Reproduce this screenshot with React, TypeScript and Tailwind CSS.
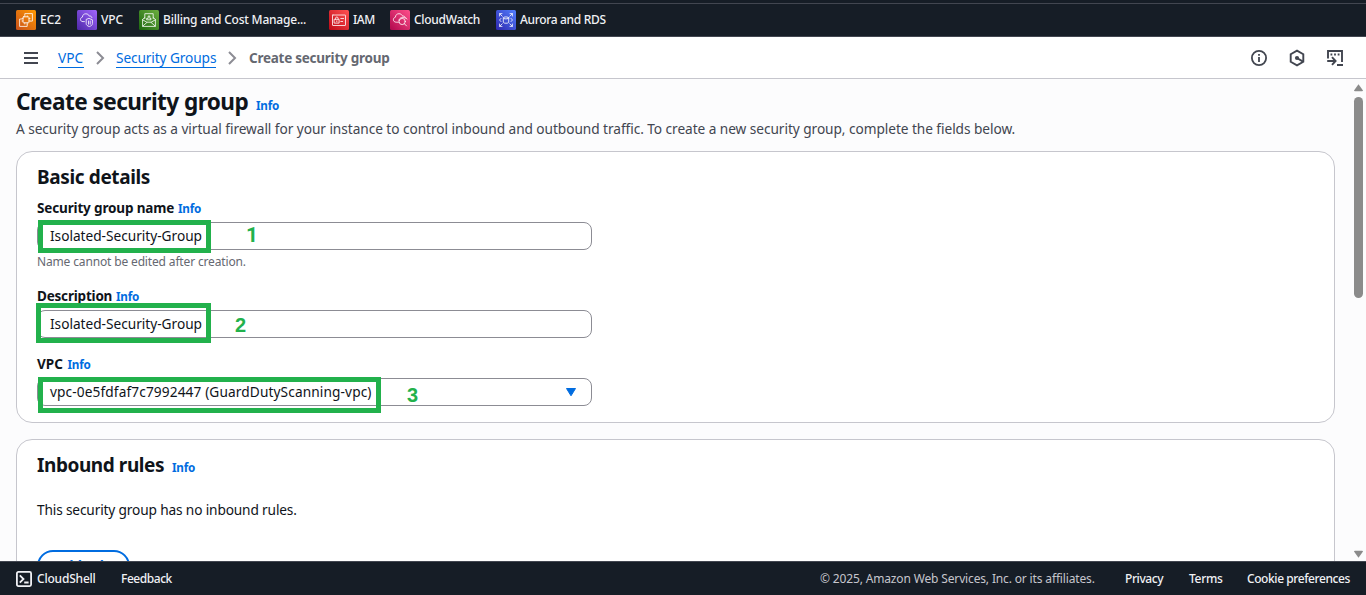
import type { ReactNode } from "react";

function ServiceIcon({ id, from, to, children }: { id: string; from: string; to: string; children: ReactNode }) {
  return (
    <svg width="20" height="20" viewBox="0 0 20 20" fill="none" stroke="white" strokeWidth="0.8" strokeLinejoin="round" strokeLinecap="round" className="shrink-0">
      <defs>
        <linearGradient id={id} x1="0" y1="1" x2="1" y2="0">
          <stop offset="0" stopColor={from} />
          <stop offset="1" stopColor={to} />
        </linearGradient>
      </defs>
      <rect width="20" height="20" rx="1.5" fill={`url(#${id})`} stroke="none" />
      {children}
    </svg>
  );
}

const cloud = "M8.6 12.2H6.2C4.6 12.2 3.4 11.2 3.4 9.7C3.4 8.3 4.3 7.5 5.4 7.2C5.5 5 7 3.7 9 3.7C10.8 3.7 12.1 4.8 12.6 6.2C14.3 5.8 15 6.6 15.1 7.7C16.2 7.9 16.8 8.4 17 9";

function TopBar() {
  return (
    <header className="flex h-[37px] shrink-0 flex-col border-b border-[#424650] bg-[#161d26] pt-[3px] text-[12px] font-medium text-[#f0f1f5]">
      <div className="flex h-[33px] items-center border-t border-[#424650] pl-4">
        <div className="flex w-[61px] shrink-0 items-center gap-1">
          <ServiceIcon id="g-ec2" from="#c8511b" to="#f90">
            <rect x="7" y="6.8" width="6" height="6" rx="0.6" />
            <path d="M8.8 6.8V5.8M11.2 6.8V5.8M8.8 12.8V14M11.2 12.8V14M13 8.6H14M13 11H14M7 8.6H6M7 11H6" />
            <path d="M8.8 5.2V3.6H16.4V11.1H14.5M5.4 9H3.6V16.4H11.2V14.4" />
          </ServiceIcon>
          <span>EC2</span>
        </div>
        <div className="flex w-[62px] shrink-0 items-center gap-1">
          <ServiceIcon id="g-vpc" from="#4d27a8" to="#a166ff">
            <path d="M7.4 11.6H6C4.5 11.6 3.5 10.8 3.5 9.4C3.5 8.1 4.4 7.4 5.4 7.1C5.5 5 6.9 3.8 8.8 3.8C10.6 3.8 11.8 4.8 12.3 6.1C13.9 5.8 14.8 6.6 14.9 7.7" />
            <path d="M12.3 8.5L15.4 9.8V13.6C15.4 15 14.3 16 12.3 16.5C10.3 16 9.2 15 9.2 13.6V9.8Z" />
            <path d="M11.5 11V14.2M13.2 11V14.2" />
          </ServiceIcon>
          <span className="tracking-[-0.1px]">VPC</span>
        </div>
        <div className="flex w-[190px] shrink-0 items-center gap-1">
          <ServiceIcon id="g-bill" from="#1b660f" to="#6cae3e">
            <path d="M5.8 8.5V3.7H14.2V8.5M5.8 7.6L3.6 9.4V16.4H16.4V9.4L14.2 7.6M3.6 9.8L8 12.3M16.4 9.8L12 12.3M3.9 16L8.2 12.2H11.8L16.1 16" />
            <path d="M8 9.8H12V8.4H10.8V6H9.2V8.4H8Z" />
          </ServiceIcon>
          <span className="tracking-[-0.22px]">Billing and Cost Manage...</span>
        </div>
        <div className="flex w-[61px] shrink-0 items-center gap-1">
          <ServiceIcon id="g-iam" from="#bd0816" to="#ff5252">
            <rect x="3.5" y="5" width="13" height="10.5" rx="0.4" />
            <rect x="5.5" y="9.3" width="4.6" height="3.8" />
            <path d="M6.5 9.2V8.2C6.5 6.6 9.1 6.6 9.1 8.2V9.2M7.8 10.8V11.7M11.8 8.5H14.6M11.8 11.5H13.6" />
          </ServiceIcon>
          <span className="tracking-[-0.4px]">IAM</span>
        </div>
        <div className="flex w-[106px] shrink-0 items-center gap-1">
          <ServiceIcon id="g-cw" from="#b0084d" to="#ff4f8b">
            <path d={cloud} />
            <circle cx="12.2" cy="11.5" r="3.1" />
            <path d="M8.8 10.4C9.4 7.5 12.6 6.6 15.1 8M14.5 13.8L16.5 15.9" />
          </ServiceIcon>
          <span className="tracking-[-0.3px]">CloudWatch</span>
        </div>
        <div className="flex shrink-0 items-center gap-1">
          <ServiceIcon id="g-rds" from="#2e27ad" to="#527fff">
            <path d="M3.6 6V3.6H6M3.8 3.8L6.2 6.2M14 3.6H16.4V6M16.2 3.8L13.8 6.2M3.6 14V16.4H6M3.8 16.2L6.2 13.8M14 16.4H16.4V14M16.2 16.2L13.8 13.8" />
            <ellipse cx="10" cy="7.9" rx="2.7" ry="1" />
            <path d="M7.3 7.9V12.3C7.3 13.6 12.7 13.6 12.7 12.3V7.9M5 8.4L3.5 10L5 11.6M15 8.4L16.5 10L15 11.6" />
          </ServiceIcon>
          <span className="tracking-[-0.33px]">Aurora and RDS</span>
        </div>
      </div>
    </header>
  );
}

function Chevron() {
  return (
    <svg width="10" height="14" viewBox="0 0 10 14" fill="none" stroke="#8c8c94" strokeWidth="2" className="shrink-0">
      <path d="M2 1L8 7L2 13" />
    </svg>
  );
}

function Breadcrumbs() {
  return (
    <nav className="flex h-[42px] shrink-0 items-center border-b border-[#c6c6cd] bg-white pl-6 pr-[22px] text-[13.7px]">
      <svg width="14" height="12" viewBox="0 0 14 12" stroke="#424650" strokeWidth="2" className="mr-5 shrink-0">
        <path d="M0 1H14M0 6H14M0 11H14" />
      </svg>
      <a className="mr-[11px] h-[20px] w-[26px] border-b border-[#006ce0] leading-[20px] text-[#006ce0]">VPC</a>
      <Chevron />
      <a className="ml-[11px] mr-[11px] h-[20px] w-[100px] whitespace-nowrap border-b border-[#006ce0] leading-[20px] tracking-[-0.11px] text-[#006ce0]">Security Groups</a>
      <Chevron />
      <span className="ml-[12px] whitespace-nowrap pt-[2px] text-[13.5px] font-bold tracking-[-0.25px] text-[#656871]">Create security group</span>
      <div className="ml-auto flex items-center gap-5">
        <svg width="18" height="18" viewBox="0 0 18 18" fill="none" stroke="#424650" strokeWidth="1.8">
          <circle cx="9" cy="9" r="7.1" />
          <path d="M9 5V6.8M9 8V13" />
        </svg>
        <svg width="18" height="18" viewBox="0 0 18 18" fill="none" stroke="#424650" strokeWidth="1.9">
          <path d="M9 1.7L15.3 5.2V12.8L9 16.3L2.7 12.8V5.2Z" />
          <circle cx="9" cy="9" r="2.1" fill="#424650" stroke="none" />
          <path d="M9 9L15 12.6" />
        </svg>
        <svg width="18" height="18" viewBox="0 0 18 18" fill="none" stroke="#424650" strokeWidth="1.9">
          <path d="M2 9.5V2H16V13" />
          <path d="M4.5 5.5H6.3M8.1 5.5H9.9M11.7 5.5H13.5" />
          <path d="M1.2 12H9M6 8.2L9.6 12L6 15.8M11 16H17" />
        </svg>
      </div>
    </nav>
  );
}

function Info() {
  return <a className="text-[11.7px] font-bold tracking-[-0.2px] text-[#006ce0]">Info</a>;
}

function Field({ children, caret }: { children: ReactNode; caret?: boolean }) {
  return (
    <div className="flex h-7 w-[555px] items-center justify-between rounded-lg border border-[#8c8c94] bg-white pl-3 pr-[14px] text-[13.7px] text-[#0f141a]">
      {children}
      {caret && (
        <svg width="12" height="10" viewBox="0 0 12 10" fill="#006ce0">
          <path d="M1.5 1.5H10.5L6 8.8Z" stroke="#006ce0" strokeLinejoin="round" />
        </svg>
      )}
    </div>
  );
}

function Footer() {
  return (
    <footer className="flex h-[34px] shrink-0 items-center whitespace-nowrap border-t border-[#424650] bg-[#161d26] px-4 text-[12px] font-medium text-[#f0f1f5]">
      <svg width="16" height="16" viewBox="0 0 16 16" fill="none" stroke="#f0f1f5" strokeWidth="1.8" className="mr-[5px] shrink-0">
        <rect x="0.9" y="0.9" width="14.2" height="14.2" rx="1.5" />
        <path d="M3.8 4.3L7.5 8L3.8 11.7M8.2 11.5H12.6" />
      </svg>
      <span className="w-[84px] tracking-[-0.2px]">CloudShell</span>
      <span className="tracking-[-0.45px]">Feedback</span>
      <div className="ml-auto flex">
        <span className="w-[305px] font-normal tracking-[-0.15px] text-[#c6c6cd]">© 2025, Amazon Web Services, Inc. or its affiliates.</span>
        <span className="w-[64px] tracking-[-0.4px]">Privacy</span>
        <span className="w-[58px] tracking-[-0.3px]">Terms</span>
        <span className="w-[103px] tracking-[-0.42px]">Cookie preferences</span>
      </div>
    </footer>
  );
}

export default function App() {
  return (
    <div className="flex h-[595px] w-[1366px] flex-col overflow-hidden bg-[#fcfcfd] font-['Noto_Sans',sans-serif] text-[#0f141a]">
      <TopBar />
      <Breadcrumbs />
      <div className="flex min-h-0 flex-1 overflow-hidden">
        <main className="min-w-0 flex-1 overflow-hidden px-4">
          <div className="flex h-[38px] items-baseline gap-2 pt-[7px]">
            <h1 className="w-[232px] whitespace-nowrap text-[22.6px] font-bold leading-[32px] tracking-[-0.56px]">Create security group</h1>
            <Info />
          </div>
          <p className="h-[34px] whitespace-nowrap pt-[2px] text-[13.7px] leading-[20px] tracking-[-0.062px] text-[#424650]">
            A security group acts as a virtual firewall for your instance to control inbound and outbound traffic. To create a new security group, complete the fields below.
          </p>
          <section className="relative h-[272px] rounded-2xl border border-[#c6c6cd] bg-white pl-5">
            <h2 className="pt-[13px] text-[19px] font-bold leading-6 tracking-[-0.37px]">Basic details</h2>
            <div className="mt-[8px] flex h-[25px] items-baseline gap-1 text-[13.5px] leading-[22px]">
              <label className="w-[137px] whitespace-nowrap font-bold tracking-[-0.15px]">Security group name</label>
              <Info />
            </div>
            <Field><span className="tracking-[-0.02px]">Isolated-Security-Group</span></Field>
            <p className="mt-1 h-[32px] text-[12px] leading-4 tracking-[-0.15px] text-[#656871]">Name cannot be edited after creation.</p>
            <div className="-mt-px flex h-[25px] items-baseline gap-1 text-[13.5px] leading-[22px]">
              <label className="w-[75px] font-bold tracking-[-0.2px]">Description</label>
              <Info />
            </div>
            <Field><span className="tracking-[-0.02px]">Isolated-Security-Group</span></Field>
            <div className="mt-[15px] flex h-[25px] items-baseline gap-1 text-[13.5px] leading-[22px]">
              <label className="w-[26.5px] font-bold">VPC</label>
              <Info />
            </div>
            <Field caret><span className="tracking-[0.11px]">vpc-0e5fdfaf7c7992447 (GuardDutyScanning-vpc)</span></Field>

            <div className="absolute left-[21px] top-[68px] h-[33px] w-[173px] border-[5px] border-[#22b14c]" />
            <div className="absolute left-[19px] top-[151px] h-[40px] w-[175px] border-[5px] border-[#22b14c]" />
            <div className="absolute left-[21px] top-[225px] h-[36px] w-[343px] border-[5px] border-[#22b14c]" />
            <span className="absolute left-[229px] top-[71px] font-['Roboto',sans-serif] text-[21px] font-bold leading-6 text-[#22b14c]">1</span>
            <span className="absolute left-[218px] top-[161px] font-['Liberation_Sans',sans-serif] text-[20px] font-bold leading-6 text-[#22b14c]">2</span>
            <span className="absolute left-[390px] top-[231px] font-['Liberation_Sans',sans-serif] text-[20px] font-bold leading-6 text-[#22b14c]">3</span>
          </section>
          <section className="mt-4 h-[200px] rounded-2xl border border-[#c6c6cd] bg-white pl-5">
            <div className="flex items-baseline gap-2 pt-[13px] leading-6">
              <h2 className="w-[127px] whitespace-nowrap text-[19px] font-bold leading-6 tracking-[-0.43px]">Inbound rules</h2>
              <Info />
            </div>
            <p className="mt-[21px] text-[13.7px] leading-5 tracking-[-0.15px]">This security group has no inbound rules.</p>
            <button className="mt-[30px] flex h-8 w-[93px] items-center justify-center rounded-full border-2 border-[#006ce0] text-[13.7px] font-bold tracking-[-0.2px] text-[#006ce0]">Add rule</button>
          </section>
        </main>
        <div className="flex w-[15px] shrink-0 flex-col items-center pt-[5px]">
          <svg width="9" height="8" viewBox="0 0 9 8" fill="#8b8b8b"><path d="M4.5 0.3L9 6.5Q9 7.3 8 7.3H1Q0 7.3 0 6.5Z" /></svg>
          <div className="mt-[5px] h-[201px] w-[9px] rounded-full bg-[#8b8b8b]" />
          <svg width="9" height="8" viewBox="0 0 9 8" fill="#8b8b8b" className="mb-[3px] mt-auto"><path d="M4.5 7.7L9 1.5Q9 0.7 8 0.7H1Q0 0.7 0 1.5Z" /></svg>
        </div>
      </div>
      <Footer />
    </div>
  );
}
